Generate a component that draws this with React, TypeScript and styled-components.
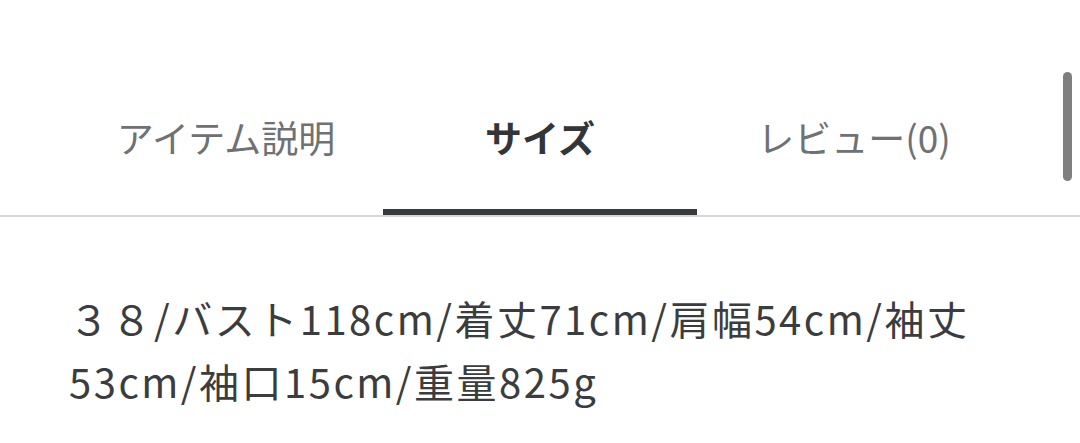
import React, { useState } from 'react'
import styled, { createGlobalStyle } from 'styled-components'

const GlobalStyle = createGlobalStyle`
  html, body {
    margin: 0;
    padding: 0;
    background: #fff;
  }
  body {
    font-family: "Noto Sans CJK JP", "Noto Sans", sans-serif;
  }
`

const tabs = ['アイテム説明', 'サイズ', 'レビュー(0)']

const App: React.FC = () => {
  const [current, setCurrent] = useState(1)
  return (
    <PageWrap>
      <GlobalStyle />
      <TabBar>
        <TabList>
          {tabs.map((label, i) => (
            <TabItem key={label} active={i === current} onClick={() => setCurrent(i)}>
              {label}
            </TabItem>
          ))}
        </TabList>
      </TabBar>
      <Content>
        <SizeText>３８/バスト118cm/着丈71cm/肩幅54cm/袖丈53cm/袖口15cm/重量825g</SizeText>
      </Content>
      <ScrollThumb />
    </PageWrap>
  )
}

const PageWrap = styled.div`
position: relative;
width: 100%;
min-height: 443px;
overflow: hidden;
`

const TabBar = styled.div`
padding-top: 65px;
border-bottom: 2px solid #d6d6d6;
`

const TabList = styled.div`
display: grid;
grid-template-columns: repeat(3, 1fr);
margin: 0 69px;
`

interface TabItemProps {
  active?: boolean
}

const TabItem = styled.div<TabItemProps>`
position: relative;
box-sizing: border-box;
height: 150px;
padding-bottom: 6px;
display: flex;
align-items: center;
justify-content: center;
font-size: 37px;
font-weight: ${props => (props.active ? 700 : 400)};
color: ${props => (props.active ? '#333538' : '#6f7174')};
cursor: pointer;
&::after {
  content: '';
  display: ${props => (props.active ? 'block' : 'none')};
  position: absolute;
  left: 0;
  right: 0;
  bottom: 0;
  height: 6px;
  background: #36393d;
}
`

const Content = styled.div`
padding: 70px 69px 0;
`

const SizeText = styled.p`
margin: 0;
font-size: 40px;
line-height: 63px;
letter-spacing: 2.5px;
color: #3b3c3e;
`

const ScrollThumb = styled.div`
position: absolute;
top: 72px;
right: 8px;
width: 9px;
height: 109px;
border-radius: 5px;
background: #7f7f7f;
`

export default App
